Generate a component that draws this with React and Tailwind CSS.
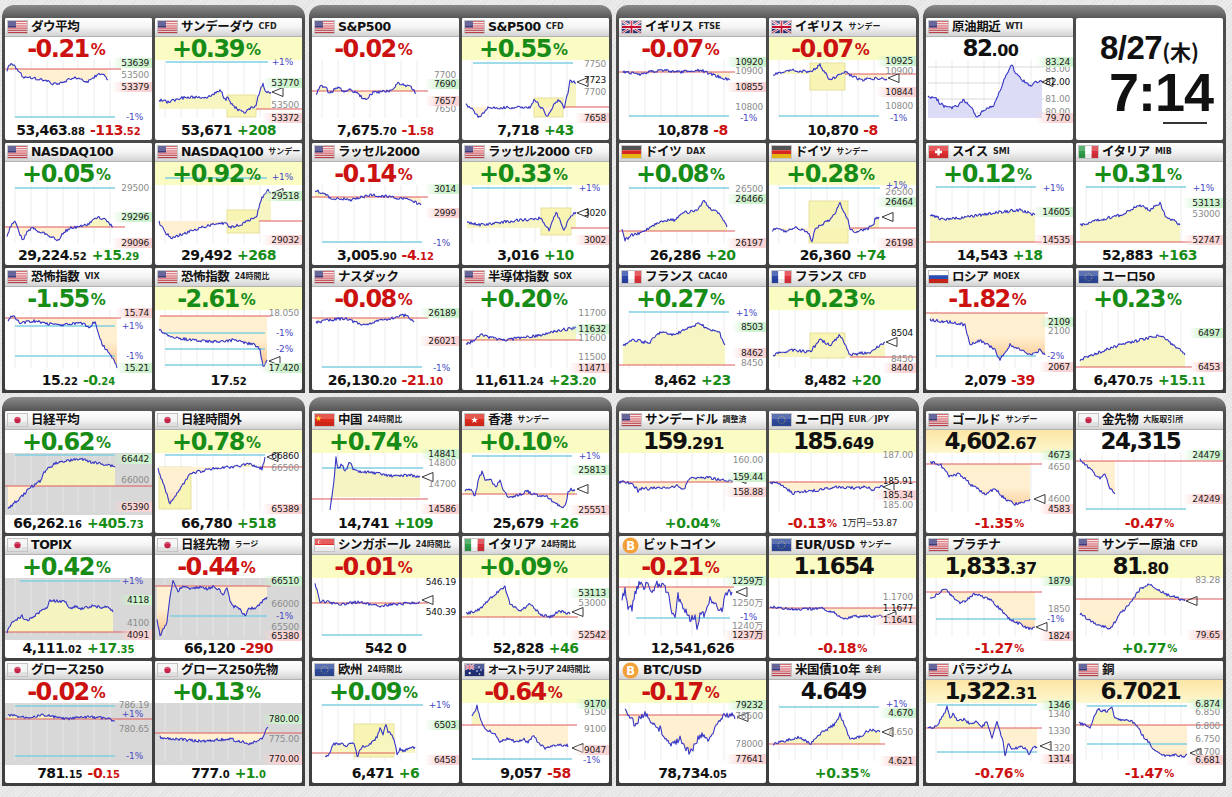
import React from 'react';

const NUM = "font-['DejaVu_Sans','Noto_Sans_CJK_JP',sans-serif]";

function P(s) {
  return s.trim().split(/\s+/).map((p) => p.split(',').map(Number));
}
function rng(seed) {
  let s = (seed * 7919 + 13) % 233280;
  return () => {
    s = (s * 9301 + 49297) % 233280;
    return s / 233280;
  };
}
function buildLine(pts, nz, seed) {
  const r = rng(seed);
  const out = [];
  for (let i = 0; i < pts.length - 1; i++) {
    const [x0, y0] = pts[i];
    const [x1, y1] = pts[i + 1];
    for (let x = x0; x < x1; x += 1) {
      const t = (x - x0) / (x1 - x0);
      out.push([x, y0 + (y1 - y0) * t + (r() - 0.5) * nz]);
    }
  }
  out.push(pts[pts.length - 1]);
  return out.map(([x, y]) => [x, Math.max(-20, Math.min(62, y))]);
}

const T = [
  { n: 'ダウ平均', f: 'us', top: { k: 'pct', v: '-0.21' }, bot: { k: 'price', i: '53,463', d: '.88', ci: '-113', cd: '.52' },
    pts: '2,10 5,4 10,7 18,17 28,18 38,20 53,25 62,20 72,18 82,22 92,15 98,14 103,20', ref: 9, red: [9, 0, 116], cy: [[57, 10, 110]],
    lb: [[3, '53639', 'g'], [15, '53500', 'n'], [27, '53379', 'r'], [57, '-1%', 'p']] },
  { n: 'サンデーダウ', s: 'CFD', f: 'us', y: 1, top: { k: 'pct', v: '+0.39' }, bot: { k: 'price', i: '53,671', ci: '+208' },
    pts: '4,40 13,42 26,38 39,37 53,37 66,30 69,40 73,38 76,43 83,50 89,53 96,48 101,47 103,37 108,23 111,33 116,32', ref: 49, red: [49, 101, 147], cy: [[2, 11, 113]],
    lb: [[2, '+1%', 'p'], [23, '53770', 'g'], [45, '53500', 'n'], [58, '53372', 'r']], bx: [[72, 35, 101, 57]], mk: [117, 32] },
  { n: 'NASDAQ100', f: 'us', top: { k: 'pct', v: '+0.05' }, bot: { k: 'price', i: '29,224', d: '.52', ci: '+15', cd: '.29' },
    pts: '2,52 5,42 10,35 13,45 18,55 23,45 28,43 35,47 42,50 47,52 53,55 58,48 65,43 75,42 85,38 92,32 98,34 103,37 108,42', ref: 42, red: [42, 0, 120], cy: [[3, 10, 110]],
    lb: [[3, '29500', 'n'], [32, '29296', 'g'], [58, '29096', 'r']] },
  { n: 'NASDAQ100', s: 'サンデー', f: 'us', y: 1, top: { k: 'pct', v: '+0.92' }, bot: { k: 'price', i: '29,492', ci: '+268' },
    pts: '4,37 10,47 16,53 25,50 40,45 55,40 70,38 75,42 85,40 95,35 102,30 106,15 110,8 113,5 116,8', ref: 36, red: [36, 104, 147], cy: [[-7, 10, 112]],
    lb: [[-8, '+1%', 'p'], [11, '29518', 'g'], [55, '29032', 'r']], bx: [[72, 25, 104, 48]], mk: [117, 8] },
  { n: '恐怖指数', s: 'VIX', f: 'us', inv: true, top: { k: 'pct', v: '-1.55' }, bot: { k: 'price', i: '15', d: '.22', ci: '-0', cd: '.24' },
    pts: '3,10 8,6 15,13 30,11 45,14 60,15 75,13 85,17 90,11 95,30 100,38 105,45 110,52 112,58', ref: 8, red: [8, 0, 116], cy: [[16, 10, 110], [46, 10, 110]],
    lb: [[3, '15.74', 'r'], [16, '+1%', 'p'], [46, '-1%', 'p'], [58, '15.21', 'g']] },
  { n: '恐怖指数', s: '24時間比', f: 'us', y: 1, inv: true, top: { k: 'pct', v: '-2.61' }, bot: { k: 'price', i: '17', d: '.52' },
    pts: '4,20 20,28 40,30 60,32 80,30 100,35 105,40 108,57 112,50', ref: 6, red: [6, 5, 116], cy: [[23, 10, 110], [39, 10, 110], [55, 10, 110]],
    lb: [[3, '18.050', 'n'], [23, '-1%', 'p'], [39, '-2%', 'p'], [58, '17.420', 'g']], mk: [114, 51] },
  { n: 'S&P500', f: 'us', top: { k: 'pct', v: '-0.02' }, bot: { k: 'price', i: '7,675', d: '.70', ci: '-1', cd: '.58' },
    pts: '4,35 9,25 14,28 17,33 22,30 27,28 32,32 39,30 46,33 52,40 56,37 61,33 69,32 76,31 82,28 86,23 92,25 99,27 104,33', ref: 31, red: [31, 0, 116],
    lb: [[15, '7700', 'n'], [49, '7650', 'n'], [24, '7690', 'g'], [41, '7657', 'r']] },
  { n: 'S&P500', s: 'CFD', f: 'us', y: 1, top: { k: 'pct', v: '+0.55' }, bot: { k: 'price', i: '7,718', ci: '+43' },
    pts: '4,45 9,48 17,57 26,48 39,48 56,47 69,47 72,40 79,47 86,57 92,43 97,40 102,47 106,33 108,20 111,22 114,23', ref: 47, red: [47, 102, 147], cy: [[3, 11, 111]],
    lb: [[4, '7750', 'n'], [32, '7700', 'n'], [20, '7723', 'k'], [58, '7658', 'r']], bx: [[72, 38, 101, 57]], mk: [115, 22] },
  { n: 'ラッセル2000', f: 'us', top: { k: 'pct', v: '-0.14' }, bot: { k: 'price', i: '3,005', d: '.90', ci: '-4', cd: '.12' },
    pts: '3,5 10,8 19,13 29,14 39,15 49,12 59,10 69,11 79,12 89,13 99,15 109,20', ref: 12, red: [12, 0, 116], cy: [[57, 10, 110]],
    lb: [[4, '3014', 'g'], [28, '2999', 'r'], [58, '-1%', 'p']] },
  { n: 'ラッセル2000', s: 'CFD', f: 'us', y: 1, top: { k: 'pct', v: '+0.33' }, bot: { k: 'price', i: '3,016', ci: '+10' },
    pts: '5,37 19,40 39,37 59,35 79,33 87,45 94,27 102,45 109,30 114,27', ref: 43, red: [43, 109, 147], cy: [[3, 10, 110]],
    lb: [[3, '+1%', 'p'], [28, '3020', 'k'], [55, '3002', 'r']], bx: [[79, 23, 109, 50]], mk: [115, 28] },
  { n: 'ナスダック', f: 'us', top: { k: 'pct', v: '-0.08' }, bot: { k: 'price', i: '26,130', d: '.20', ci: '-21', cd: '.10' },
    pts: '4,12 19,10 34,8 49,15 64,12 79,8 94,5 102,12', ref: 8, red: [8, 0, 116], cy: [[57, 10, 110]],
    lb: [[3, '26189', 'g'], [31, '26021', 'r'], [58, '-1%', 'p']] },
  { n: '半導体指数', s: 'SOX', f: 'us', top: { k: 'pct', v: '+0.20' }, bot: { k: 'price', i: '11,611', d: '.24', ci: '+23', cd: '.20' },
    pts: '4,35 19,25 39,30 59,28 79,25 99,20 114,18', ref: 30, red: [30, 0, 120],
    lb: [[3, '11700', 'n'], [28, '11600', 'n'], [47, '11500', 'n'], [19, '11632', 'g'], [58, '11471', 'r']] },
  { n: 'イギリス', s: 'FTSE', f: 'uk', top: { k: 'pct', v: '-0.07' }, bot: { k: 'price', i: '10,878', ci: '-8' },
    pts: '4,12 21,14 41,10 61,12 81,10 101,17 111,20', ref: 12, red: [12, 0, 116], cy: [[56, 10, 110]],
    lb: [[11, '10900', 'n'], [47, '10800', 'n'], [2, '10920', 'g'], [27, '10855', 'r'], [58, '-1%', 'p']] },
  { n: 'イギリス', s: 'サンデー', f: 'uk', y: 1, top: { k: 'pct', v: '-0.07' }, bot: { k: 'price', i: '10,870', ci: '-8' },
    pts: '4,15 21,10 41,12 51,5 61,20 76,12 91,20 111,18 118,20', ref: 14, red: [14, 76, 147], cy: [[56, 10, 110]],
    lb: [[11, '10900', 'n'], [46, '10800', 'n'], [1, '10925', 'g'], [32, '10844', 'r'], [58, '-1%', 'p']], bx: [[41, 3, 76, 30]], mk: [119, 18] },
  { n: 'ドイツ', s: 'DAX', f: 'de', top: { k: 'pct', v: '+0.08' }, bot: { k: 'price', i: '26,286', ci: '+20' },
    pts: '3,45 6,55 13,50 20,48 26,45 33,42 40,37 46,35 55,35 60,32 65,27 71,27 78,25 81,22 85,14 88,20 93,25 98,27 103,32 108,42', ref: 46, red: [46, 0, 116], cy: [[3, 10, 110]],
    lb: [[4, '26500', 'n'], [14, '26466', 'g'], [58, '26197', 'r']] },
  { n: 'ドイツ', s: 'サンデー', f: 'de', y: 1, top: { k: 'pct', v: '+0.28' }, bot: { k: 'price', i: '26,360', ci: '+74' },
    pts: '3,45 10,43 16,47 25,42 33,45 40,48 43,57 46,43 53,40 60,35 66,28 71,17 75,28 78,32 81,43 86,47 93,45 100,43 105,38 106,33 110,32', ref: 43, red: [43, 81, 147], cy: [[3, 10, 111]],
    lb: [[0, '+1%', 'p'], [7, '26500', 'n'], [17, '26464', 'g'], [58, '26198', 'r']], bx: [[40, 16, 79, 58]], mk: [113, 32] },
  { n: 'フランス', s: 'CAC40', f: 'fr', top: { k: 'pct', v: '+0.27' }, bot: { k: 'price', i: '8,462', ci: '+23' },
    pts: '4,35 15,30 30,33 41,22 55,25 70,18 81,13 90,20 100,22 106,35', ref: 55, red: [55, 0, 116], cy: [[2, 10, 110]],
    lb: [[3, '+1%', 'p'], [53, '8450', 'n'], [17, '8503', 'g'], [43, '8462', 'r']] },
  { n: 'フランス', s: 'CFD', f: 'fr', y: 1, top: { k: 'pct', v: '+0.23' }, bot: { k: 'price', i: '8,482', ci: '+20' },
    pts: '4,45 21,40 41,42 51,30 61,35 71,25 81,45 101,42 111,35 116,32', ref: 47, red: [47, 81, 147],
    lb: [[49, '8450', 'n'], [23, '8504', 'k'], [58, '8440', 'r']], bx: [[41, 23, 76, 48]], mk: [117, 32] },
  { n: '原油期近', s: 'WTI', f: 'us', top: { k: 'price', i: '82', d: '.00' }, bot: null,
    pts: '2,37 9,37 14,43 19,47 26,48 32,45 37,40 42,43 47,50 51,57 56,52 62,48 67,47 71,37 76,25 81,13 86,5 89,12 92,15 96,20 101,23 104,26 109,22 116,22',
    area: [58, '#dcdcf6'], hl: [7, 23, 39, 53],
    lb: [[9, '83.00', 'n'], [39, '81.00', 'n'], [52, '80.00', 'n'], [2, '83.24', 'g'], [22, '82.00', 'k'], [58, '79.70', 'r']], mk: [116, 22] },
  { clock: true },
  { n: 'スイス', s: 'SMI', f: 'ch', top: { k: 'pct', v: '+0.12' }, bot: { k: 'price', i: '14,543', ci: '+18' },
    pts: '4,30 19,35 34,33 54,30 74,27 94,25 109,30', ref: 57, red: [57, 0, 116], cy: [[2, 10, 110]],
    lb: [[3, '+1%', 'p'], [27, '14605', 'g'], [55, '14535', 'r']] },
  { n: 'イタリア', s: 'MIB', f: 'it', top: { k: 'pct', v: '+0.31' }, bot: { k: 'price', i: '52,883', ci: '+163' },
    pts: '4,40 24,35 44,30 64,20 74,25 84,18 89,30 104,40', ref: 57, red: [57, 0, 116], cy: [[2, 10, 110]],
    lb: [[3, '+1%', 'p'], [29, '53000', 'n'], [18, '53113', 'g'], [55, '52747', 'r']] },
  { n: 'ロシア', s: 'MOEX', f: 'ru', top: { k: 'pct', v: '-1.82' }, bot: { k: 'price', i: '2,079', ci: '-39' },
    pts: '4,10 24,12 39,15 44,35 54,30 69,40 74,50 84,35 94,40 104,45 114,40 119,45', ref: 3, red: [3, 0, 122], cy: [[46, 10, 110]],
    lb: [[21, '2100', 'n'], [12, '2109', 'g'], [46, '-2%', 'p'], [57, '2067', 'r']] },
  { n: 'ユーロ50', f: 'eu', top: { k: 'pct', v: '+0.23' }, bot: { k: 'price', i: '6,470', d: '.75', ci: '+15', cd: '.11' },
    pts: '4,50 24,42 44,35 64,30 84,25 104,40 109,45', ref: 57, red: [57, 0, 116],
    lb: [[23, '6497', 'g'], [57, '6453', 'r']] },
];

const B = [
  { n: '日経平均', f: 'jp', gray: true, top: { k: 'pct', v: '+0.62' }, bot: { k: 'price', i: '66,262', d: '.16', ci: '+405', cd: '.73' },
    pts: '3,56 15,45 25,35 35,28 40,18 50,10 60,8 75,6 90,10 105,12 110,14', ref: 33, red: [33, 0, 147], cy: [[2, 10, 110]],
    lb: [[27, '66000', 'n'], [6, '66442', 'g'], [54, '65390', 'r']] },
  { n: '日経時間外', f: 'jp', y: 1, top: { k: 'pct', v: '+0.78' }, bot: { k: 'price', i: '66,780', ci: '+518' },
    pts: '3,16 10,36 15,51 25,36 35,21 55,16 75,14 95,11 107,16 110,4', ref: 14, red: [14, 105, 147], cy: [[2, 10, 110]],
    lb: [[15, '66500', 'n'], [3, '66860', 'k'], [56, '65389', 'r']], bx: [[4, 14, 36, 56]], mk: [112, 4] },
  { n: 'TOPIX', f: 'jp', gray: true, top: { k: 'pct', v: '+0.42' }, bot: { k: 'price', i: '4,111', d: '.02', ci: '+17', cd: '.35' },
    pts: '2,54 7,44 12,41 17,38 22,43 28,39 35,34 42,29 45,23 60,23 65,31 70,28 75,31 82,29 88,28 95,29 102,29 108,34', ref: 54, red: [54, 0, 147], cy: [[3, 15, 115]],
    lb: [[3, '+1%', 'p'], [45, '4100', 'n'], [22, '4118', 'g'], [57, '4091', 'r']] },
  { n: '日経先物', s: 'ラージ', f: 'jp', gray: true, top: { k: 'pct', v: '-0.44' }, bot: { k: 'price', i: '66,120', ci: '-290' },
    pts: '2,41 5,58 8,51 12,44 15,18 18,3 23,13 28,8 35,11 45,9 52,11 58,9 65,11 68,18 72,9 75,24 78,28 85,31 90,38 93,31 102,29 107,24 112,19', ref: 8, red: [8, 0, 116], cy: [[38, 15, 112]],
    lb: [[26, '66000', 'n'], [49, '65500', 'n'], [3, '66510', 'g'], [38, '-1%', 'p'], [58, '65380', 'r']] },
  { n: 'グロース250', f: 'jp', gray: true, top: { k: 'pct', v: '-0.02' }, bot: { k: 'price', i: '781', d: '.15', ci: '-0', cd: '.15' },
    pts: '3,12 20,14 40,12 60,16 80,14 100,15 110,18', ref: 16, red: [16, 0, 147], cy: [[3, 10, 110], [53, 10, 110]],
    lb: [[2, '786.19', 'n'], [11, '+1%', 'p'], [26, '780.65', 'n'], [53, '-1%', 'p']] },
  { n: 'グロース250先物', f: 'jp', gray: true, top: { k: 'pct', v: '+0.13' }, bot: { k: 'price', i: '777', d: '.0', ci: '+1', cd: '.0' },
    pts: '5,34 20,36 45,38 75,36 95,41 107,36 113,24', ref: 30, red: [30, 0, 147],
    lb: [[36, '775.00', 'n'], [16, '780.00', 'g'], [56, '770.00', 'r']] },
  { n: '中国', s: '24時間比', f: 'cn', y: 1, top: { k: 'pct', v: '+0.74' }, bot: { k: 'price', i: '14,741', ci: '+109' },
    pts: '18,56 20,43 22,26 24,4 26,16 30,11 33,18 38,9 41,16 46,19 55,19 68,21 81,23 95,22 108,24', area: [44, '#f6f4c2'], red: [46, 0, 116], cy: [[15, 10, 111]],
    lb: [[10, '14800', 'n'], [31, '14700', 'n'], [1, '14841', 'g'], [56, '14586', 'r']], mk: [110, 24] },
  { n: '香港', s: 'サンデー', f: 'hk', y: 1, top: { k: 'pct', v: '+0.10' }, bot: { k: 'price', i: '25,679', ci: '+26' },
    pts: '3,38 8,36 13,43 16,29 20,18 23,28 28,26 33,34 38,28 41,38 46,43 55,43 65,38 71,41 78,43 85,44 91,48 98,53 101,56 105,46 106,38 110,36 113,38', ref: 41, red: [41, 0, 115], cy: [[3, 10, 110]],
    lb: [[3, '+1%', 'p'], [17, '25813', 'g'], [57, '25551', 'r']], mk: [115, 36] },
  { n: 'シンガポール', s: '24時間比', f: 'sg', y: 1, top: { k: 'pct', v: '-0.01' }, bot: { k: 'price', i: '542 0' },
    pts: '3,6 8,23 28,26 48,24 68,28 88,26 108,24', ref: 25, red: [25, 0, 116], cy: [[57, 10, 110]],
    lb: [[4, '546.19', 'k'], [34, '540.39', 'k']], mk: [110, 22] },
  { n: 'イタリア', s: '24時間比', f: 'it', y: 1, top: { k: 'pct', v: '+0.09' }, bot: { k: 'price', i: '52,828', ci: '+46' },
    pts: '4,36 18,31 33,16 43,9 48,26 58,33 68,26 78,36 88,39 98,33 108,36', ref: 39, red: [39, 0, 116],
    lb: [[25, '53000', 'n'], [15, '53113', 'g'], [57, '52542', 'r']], mk: [110, 34] },
  { n: '欧州', s: '24時間比', f: 'eu', top: { k: 'pct', v: '+0.09' }, bot: { k: 'price', i: '6,471', ci: '+6' },
    pts: '13,53 18,51 21,41 28,41 35,43 40,39 43,43 45,54 48,48 51,43 55,44 60,39 65,34 68,26 71,31 74,22 76,29 80,31 83,41 85,51 88,46 91,48 98,46 103,44', ref: 50, red: [50, 0, 83], cy: [[2, 10, 111]],
    lb: [[2, '+1%', 'p'], [22, '6503', 'g'], [57, '6458', 'r']], bx: [[42, 21, 82, 54]] },
  { n: 'オーストラリア', s: '24時間比', nc: true, f: 'au', y: 1, top: { k: 'pct', v: '-0.64' }, bot: { k: 'price', i: '9,057', ci: '-58' },
    pts: '10,13 13,8 15,3 18,14 21,23 25,28 31,29 38,38 45,36 55,39 61,36 66,39 71,33 76,39 83,46 90,43 96,41 100,43 105,42 106,44', ref: 22, red: [22, 0, 115], cy: [[56, 10, 110]],
    lb: [[9, '9150', 'n'], [26, '9100', 'n'], [1, '9170', 'g'], [47, '9047', 'r'], [57, '-1%', 'p']], mk: [110, 45] },
  { n: 'サンデードル', s: '調整済', f: 'us', y: 1, top: { k: 'price', i: '159', d: '.291' }, bot: { k: 'pct', v: '+0.04' },
    pts: '0,29 6,29 14,31 19,38 24,35 31,36 39,34 48,36 58,33 63,35 66,36 68,29 71,24 78,25 88,24 98,26 108,28 114,28', ref: 29, red: [29, 0, 114],
    lb: [[7, '160.00', 'n'], [24, '159.44', 'g'], [39, '158.88', 'r']], mk: [116, 26] },
  { n: 'ユーロ円', s: 'EUR／JPY', f: 'eu', y: 1, top: { k: 'price', i: '185', d: '.649' }, bot: { k: 'pct', v: '-0.13', x: '1万円=53.87' },
    pts: '1,29 11,31 18,36 24,40 31,39 41,38 51,37 61,35 71,34 84,35 98,34 104,37 111,33 114,34', ref: 29, red: [29, 0, 147],
    lb: [[2, '187.00', 'n'], [52, '185.00', 'n'], [28, '185.91', 'k'], [42, '185.34', 'r']], mk: [114, 34] },
  { n: 'ビットコイン', f: 'btc', y: 1, top: { k: 'pct', v: '-0.21' }, bot: { k: 'price', i: '12,541,626' }, nz: 7,
    pts: '3,21 6,13 9,28 13,31 16,16 21,4 24,9 28,6 33,13 38,6 44,8 49,14 53,33 56,36 59,18 63,28 68,34 71,41 76,38 78,54 81,38 86,36 91,19 94,26 98,28 103,34 106,16 109,13 113,14', ref: 9, red: [9, 0, 115], cy: [[40, 17, 111]],
    lb: [[25, '1250万', 'n'], [48, '1240万', 'n'], [3, '1259万', 'g'], [39, '-1%', 'p'], [57, '1237万', 'r']], mk: [117, 14] },
  { n: 'EUR/USD', s: 'サンデー', f: 'eu', y: 1, top: { k: 'price', i: '1.1654' }, bot: { k: 'pct', v: '-0.18' },
    pts: '1,29 14,30 28,32 41,31 51,30 61,33 71,38 74,41 81,39 94,38 108,39 114,38', ref: 30, red: [30, 0, 147],
    lb: [[19, '1.1700', 'n'], [30, '1.1677', 'k'], [42, '1.1641', 'r']], mk: [116, 38] },
  { n: 'BTC/USD', f: 'btc', y: 1, top: { k: 'pct', v: '-0.17' }, bot: { k: 'price', i: '78,734', d: '.05' }, nz: 7,
    pts: '6,8 16,21 26,11 41,26 51,41 61,36 71,51 81,31 91,36 101,16 111,11 116,16', ref: 12, red: [12, 0, 115],
    lb: [[13, '78500', 'n'], [41, '78000', 'n'], [2, '79232', 'g'], [56, '77641', 'r']], mk: [118, 14] },
  { n: '米国債10年', s: '金利', f: 'us', top: { k: 'price', i: '4.649' }, bot: { k: 'pct', v: '+0.35' },
    pts: '4,41 16,38 31,34 41,41 51,31 66,21 71,11 81,36 91,34 101,26 111,29', ref: 41, red: [41, 0, 116], cy: [[4, 10, 110]],
    lb: [[1, '+1%', 'p'], [29, '4.650', 'n'], [10, '4.670', 'g'], [58, '4.621', 'r']], mk: [113, 29] },
  { n: 'ゴールド', s: 'サンデー', f: 'us', y: 2, top: { k: 'price', i: '4,602', d: '.67' }, bot: { k: 'pct', v: '-1.35' },
    pts: '4,9 14,11 24,24 34,21 44,31 59,41 69,36 79,46 89,51 99,49 104,46', ref: 11, red: [11, 0, 116],
    lb: [[14, '4650', 'n'], [46, '4600', 'n'], [2, '4673', 'g'], [56, '4583', 'r']], mk: [108, 46] },
  { n: '金先物', s: '大阪取引所', f: 'jp', top: { k: 'price', i: '24,315' }, bot: { k: 'pct', v: '-0.47' },
    pts: '4,6 14,16 24,26 29,21 34,36 39,41', ref: 8, red: [8, 0, 147], cy: [[56, 10, 110]],
    lb: [[2, '24479', 'g'], [46, '24249', 'r']] },
  { n: 'プラチナ', f: 'us', y: 1, top: { k: 'price', i: '1,833', d: '.37' }, bot: { k: 'pct', v: '-1.27' },
    pts: '4,21 19,11 34,26 49,16 64,21 74,31 84,41 94,46 104,51 109,49', ref: 14, red: [14, 0, 116], cy: [[41, 10, 110]],
    lb: [[31, '1850', 'n'], [3, '1879', 'g'], [41, '-1%', 'p'], [58, '1824', 'r']], mk: [110, 49] },
  { n: 'サンデー原油', s: 'CFD', f: 'us', y: 1, top: { k: 'price', i: '81', d: '.80' }, bot: { k: 'pct', v: '+0.77' },
    pts: '4,36 19,46 34,51 44,36 54,26 64,11 74,6 89,16 104,21 109,23', ref: 21, red: [21, 0, 147],
    lb: [[2, '83.28', 'n'], [57, '79.65', 'r']], mk: [110, 23] },
  { n: 'パラジウム', f: 'us', y: 2, top: { k: 'price', i: '1,322', d: '.31' }, bot: { k: 'pct', v: '-0.76' },
    pts: '2,24 7,26 12,21 16,13 19,11 21,3 24,14 27,11 32,18 37,16 44,21 51,18 56,24 61,19 66,36 71,19 74,29 77,39 79,54 82,41 87,46 94,44 101,46 103,52 107,43 111,44', ref: 25, red: [25, 0, 116], cy: [[2, 11, 111], [49, 11, 111]],
    lb: [[11, '1340', 'n'], [28, '1330', 'n'], [45, '1320', 'n'], [2, '1346', 'g'], [56, '1314', 'r']], mk: [114, 43] },
  { n: '銅', f: 'us', y: 2, top: { k: 'price', i: '6.7021' }, bot: { k: 'pct', v: '-1.47' },
    pts: '3,20 9,22 14,26 17,16 22,6 27,8 32,8 36,3 39,16 44,16 51,18 57,19 62,23 67,33 72,38 77,46 84,51 91,53 97,52 104,53 109,54 111,51', ref: 22, red: [22, 0, 147], cy: [[3, 11, 111], [41, 11, 111]],
    lb: [[9, '6.850', 'n'], [23, '6.800', 'n'], [36, '6.750', 'n'], [49, '6.700', 'n'], [1, '6.874', 'g'], [57, '6.681', 'r']], mk: [114, 50] },
];

function Flag({ f }) {
  if (f === 'btc') {
    return (
      <svg width="17" height="17" viewBox="0 0 17 17" className="shrink-0">
        <circle cx="8.5" cy="8.5" r="8" fill="#f2a13a" />
        <text x="8.6" y="12.6" textAnchor="middle" fontSize="11.5" fontWeight="bold" fill="#fff" fontFamily="DejaVu Sans, sans-serif">B</text>
      </svg>
    );
  }
  let body = null;
  if (f === 'us') {
    body = (
      <>
        <rect width="19" height="12" fill="#fff" />
        {[0, 2, 4, 6, 8, 10, 12].map((i) => (
          <rect key={i} y={(i * 12) / 13} width="19" height={12 / 13} fill="#c9343f" />
        ))}
        <rect width="8" height="6.5" fill="#3c3b7e" />
      </>
    );
  } else if (f === 'uk' || f === 'au') {
    const uj = (
      <>
        <rect width="19" height="12" fill="#23307a" />
        <path d="M0 0L19 12M19 0L0 12" stroke="#fff" strokeWidth="2.4" />
        <path d="M0 0L19 12M19 0L0 12" stroke="#c8102e" strokeWidth="0.9" />
        <path d="M9.5 0V12M0 6H19" stroke="#fff" strokeWidth="3.4" />
        <path d="M9.5 0V12M0 6H19" stroke="#c8102e" strokeWidth="1.8" />
      </>
    );
    body = f === 'uk' ? uj : (
      <>
        <rect width="19" height="12" fill="#23307a" />
        <svg width="9.5" height="6" viewBox="0 0 19 12">{uj}</svg>
        <circle cx="4.7" cy="9.2" r="1.1" fill="#fff" />
        <circle cx="14" cy="3" r="0.8" fill="#fff" />
        <circle cx="16" cy="6" r="0.8" fill="#fff" />
        <circle cx="12" cy="7" r="0.8" fill="#fff" />
        <circle cx="14.5" cy="10" r="0.8" fill="#fff" />
      </>
    );
  } else if (f === 'de') {
    body = (
      <>
        <rect width="19" height="4" fill="#222" />
        <rect y="4" width="19" height="4" fill="#d6281e" />
        <rect y="8" width="19" height="4" fill="#f5c518" />
      </>
    );
  } else if (f === 'ch') {
    body = (
      <>
        <rect width="19" height="12" fill="#e03030" />
        <rect x="8.3" y="2.5" width="2.4" height="7" fill="#fff" />
        <rect x="6" y="4.8" width="7" height="2.4" fill="#fff" />
      </>
    );
  } else if (f === 'it' || f === 'fr') {
    const c = f === 'it' ? ['#2f9e4a', '#fff', '#d8303a'] : ['#2a44a8', '#fff', '#e0323a'];
    body = (
      <>
        <rect width="6.4" height="12" fill={c[0]} />
        <rect x="6.3" width="6.4" height="12" fill={c[1]} />
        <rect x="12.6" width="6.4" height="12" fill={c[2]} />
      </>
    );
  } else if (f === 'ru') {
    body = (
      <>
        <rect width="19" height="4" fill="#fff" />
        <rect y="4" width="19" height="4" fill="#2b4fb0" />
        <rect y="8" width="19" height="4" fill="#d6281e" />
      </>
    );
  } else if (f === 'eu') {
    body = (
      <>
        <rect width="19" height="12" fill="#2e4a9c" />
        {Array.from({ length: 12 }).map((_, i) => {
          const a = (i / 12) * Math.PI * 2;
          return <circle key={i} cx={9.5 + Math.cos(a) * 3.6} cy={6 + Math.sin(a) * 3.6} r="0.45" fill="#f4d03f" />;
        })}
      </>
    );
  } else if (f === 'jp') {
    body = (
      <>
        <rect width="19" height="12" fill="#f4f4f4" />
        <circle cx="9.5" cy="6" r="3.2" fill="#c8244a" />
      </>
    );
  } else if (f === 'cn') {
    body = (
      <>
        <rect width="19" height="12" fill="#de2a1c" />
        <polygon points="3.5,1.5 4.3,3.6 6.4,3.6 4.7,4.9 5.3,7 3.5,5.7 1.7,7 2.3,4.9 0.6,3.6 2.7,3.6" fill="#ffd200" />
      </>
    );
  } else if (f === 'hk') {
    body = (
      <>
        <rect width="19" height="12" fill="#de2a1c" />
        <polygon points="9.5,2.6 10.4,5 13,5 10.9,6.6 11.7,9.1 9.5,7.6 7.3,9.1 8.1,6.6 6,5 8.6,5" fill="#fff" />
      </>
    );
  } else if (f === 'sg') {
    body = (
      <>
        <rect width="19" height="6" fill="#e03030" />
        <rect y="6" width="19" height="6" fill="#fff" />
        <circle cx="4.5" cy="3" r="1.8" fill="#fff" />
        <circle cx="5.2" cy="3" r="1.6" fill="#e03030" />
      </>
    );
  }
  return (
    <svg width="19" height="12" viewBox="0 0 19 12" className="shrink-0 shadow-[0_0_0_1px_#c4c4c4]">
      {body}
      <rect width="19" height="5" fill="#fff" opacity="0.22" />
      <rect y="8" width="19" height="4" fill="#000" opacity="0.08" />
    </svg>
  );
}

function Chart({ d, id }) {
  const line = d.pts ? buildLine(P(d.pts), d.nz ?? 3, id + 3) : [];
  const str = line.map((p) => p[0].toFixed(1) + ',' + p[1].toFixed(1)).join(' ');
  const first = line[0];
  const last = line[line.length - 1];
  let fillD = null;
  if (line.length && d.ref != null) {
    fillD = `M${first[0]},${d.ref} L${str.split(' ').join(' L')} L${last[0]},${d.ref} Z`;
  }
  let areaD = null;
  if (line.length && d.area) {
    areaD = `M${first[0]},${d.area[0]} L${str.split(' ').join(' L')} L${last[0]},${d.area[0]} Z`;
  }
  const grid = [10, 26, 42, 58, 73, 89, 105];
  return (
    <svg className="absolute left-0 top-0" width="147" height="103" viewBox="0 0 147 103">
      {fillD && (
        <defs>
          <clipPath id={`ca${id}`}>
            <rect x="0" y="-30" width="147" height={d.ref + 30} />
          </clipPath>
          <clipPath id={`cb${id}`}>
            <rect x="0" y={d.ref} width="147" height="100" />
          </clipPath>
          <linearGradient id={`go${id}`} x1="0" y1={d.ref + 23} x2="0" y2={d.ref + 23 + 40} gradientUnits="userSpaceOnUse">
            <stop offset="0" stopColor="#fff0d2" />
            <stop offset="1" stopColor="#f8ad66" />
          </linearGradient>
        </defs>
      )}
      <g transform="translate(0,23)">
        {grid.map((x) => (
          <line key={x} x1={x} x2={x} y1="0" y2="58" stroke={d.gray ? '#e6e6e6' : '#ececec'} strokeWidth="1" />
        ))}
        {(d.hl || []).map((y) => (
          <line key={'h' + y} x1="2" x2="118" y1={y} y2={y} stroke="#d8d8d8" strokeWidth="1" />
        ))}
        {(d.bx || []).map((b, i) => (
          <rect key={'b' + i} x={b[0]} y={b[1]} width={b[2] - b[0]} height={b[3] - b[1]} fill="#f8f5b4" stroke="#e2d98e" strokeWidth="0.8" />
        ))}
        {areaD && <path d={areaD} fill={d.area[1]} />}
        {fillD && <path d={fillD} fill="#f7f5c0" opacity="0.95" clipPath={`url(#ca${id})`} />}
        {fillD && <path d={fillD} fill={`url(#go${id})`} clipPath={`url(#cb${id})`} />}
        {(d.cy || []).map((c, i) => (
          <line key={'c' + i} x1={c[1]} x2={c[2]} y1={c[0]} y2={c[0]} stroke="#7fcfe0" strokeWidth="1.3" />
        ))}
        {d.red && <line x1={d.red[1]} x2={d.red[2]} y1={d.red[0]} y2={d.red[0]} stroke="#dd5a5a" strokeWidth="1.2" />}
        {line.length > 0 && <polyline points={str} fill="none" stroke="#3535c6" strokeWidth="1.1" strokeLinejoin="round" />}
        {d.mk && (
          <path d={`M${d.mk[0] + 11},${d.mk[1] - 4.5} L${d.mk[0]},${d.mk[1]} L${d.mk[0] + 11},${d.mk[1] + 4.5} Z`} fill="none" stroke="#222" strokeWidth="0.9" />
        )}
      </g>
    </svg>
  );
}

const LBL = {
  g: 'pr-[3px] pl-[9px] text-[#1a1a1a] bg-[linear-gradient(to_right,rgba(205,242,205,0),#cdf2cd_45%)]',
  r: 'pr-[3px] pl-[9px] text-[#1a1a1a] bg-[linear-gradient(to_right,rgba(250,212,212,0),#fad4d4_45%)]',
  n: 'pr-[3px] text-[#8c8c8c]',
  p: 'pr-[9px] text-[#4848c4]',
  k: 'pr-[3px] text-[#111]',
};

function up(s) {
  return s.trim()[0] === '+';
}

function Tile({ d, id }) {
  const topGood = d.top.k === 'pct' ? up(d.top.v) !== !!d.inv : true;
  return (
    <div className="w-[147px] h-[122px] bg-white rounded-[2px] overflow-hidden flex flex-col">
      <div className="h-[19px] flex items-center bg-[linear-gradient(#ffffff,#f4f4f4_50%,#d3d3d3)] border-b border-[#b3b3b3] pl-[3px] overflow-hidden">
        <Flag f={d.f} />
        {d.nc ? (
          <span className="ml-[4px] text-[11px] font-bold text-[#111] tracking-[-1.6px] whitespace-nowrap leading-none font-['DejaVu_Sans','Noto_Sans_CJK_JP',sans-serif]">
            {d.n}
          </span>
        ) : (
          <span className="ml-[4px] text-[12.5px] font-bold text-[#111] tracking-[-0.4px] whitespace-nowrap leading-none font-['DejaVu_Sans','Noto_Sans_CJK_JP',sans-serif]">
            {d.n}
          </span>
        )}
        {d.s && (
          <span className={`${d.nc ? 'ml-[3px] tracking-[-0.3px]' : 'ml-[5px]'} text-[8px] font-bold text-[#222] whitespace-nowrap leading-none font-['DejaVu_Sans','Noto_Sans_CJK_JP',sans-serif]`}>
            {d.s}
          </span>
        )}
      </div>
      <div className="relative h-[103px] flex flex-col">
        {d.y === 1 && <div className="absolute left-0 top-0 w-full h-[23px] bg-[#fbfbc4]" />}
        {d.y === 2 && <div className="absolute left-0 top-0 w-full h-[23px] bg-[linear-gradient(#fde5a6,#fdf8cf)]" />}
        {d.gray && <div className="absolute left-0 top-[23px] w-full h-[62px] bg-[#d8d8d8]" />}
        <Chart d={d} id={id} />
        {d.lb.map(([y, t, k], i) => (
          <div
            key={i}
            className={`absolute right-0 h-[10px] flex items-center justify-end text-[9px] leading-none tracking-[-0.2px] whitespace-nowrap font-['DejaVu_Sans','Noto_Sans_CJK_JP',sans-serif] ${LBL[k]}`}
            style={{ top: y + 23 - 5 }}
          >
            {t}
          </div>
        ))}
        {d.top.k === 'pct' ? (
          <div className={`relative h-[23px] flex items-center justify-center pr-[24px] font-bold leading-none ${NUM} ${topGood ? 'text-[#178c17]' : 'text-[#cc1111]'}`}>
            <span className="text-[24px] tracking-[-1.5px]">{d.top.v}</span>
            <span className="text-[15px] ml-[2px] mt-[4px]">%</span>
          </div>
        ) : (
          <div className={`relative h-[23px] flex items-center justify-center pr-[18px] font-bold leading-none text-[#111] ${NUM}`}>
            <span className="text-[23px] tracking-[-1.5px]">{d.top.i}</span>
            {d.top.d && <span className="text-[16px] tracking-[-0.5px] mt-[4px]">{d.top.d}</span>}
          </div>
        )}
        <div className="h-[60px]" />
        {d.bot && d.bot.k === 'price' && (
          <div className={`relative h-[20px] flex items-center justify-center font-bold leading-none text-[#111] ${NUM}`}>
            <span className="text-[14px] tracking-[-0.5px]">{d.bot.i}</span>
            {d.bot.d && <span className="text-[10px] mt-[3px]">{d.bot.d}</span>}
            {d.bot.ci && (
              <span className={`ml-[5px] flex items-center ${up(d.bot.ci) !== !!d.inv ? 'text-[#178c17]' : 'text-[#cc1111]'}`}>
                <span className="text-[14px] tracking-[-0.5px]">{d.bot.ci}</span>
                {d.bot.cd && <span className="text-[10px] mt-[3px]">{d.bot.cd}</span>}
              </span>
            )}
          </div>
        )}
        {d.bot && d.bot.k === 'pct' && (
          <div className={`relative h-[20px] flex items-center justify-center font-bold leading-none ${NUM}`}>
            <span className={`flex items-center ${up(d.bot.v) ? 'text-[#178c17]' : 'text-[#cc1111]'}`}>
              <span className="text-[14px] tracking-[-0.4px]">{d.bot.v}</span>
              <span className="text-[10px] ml-[1px] mt-[2px]">%</span>
            </span>
            {d.bot.x && <span className="ml-[5px] text-[9px] font-normal text-[#222] tracking-[-0.2px]">{d.bot.x}</span>}
          </div>
        )}
      </div>
    </div>
  );
}

function Clock() {
  return (
    <div className="w-[147px] h-[122px] bg-white rounded-[2px] flex flex-col items-center font-['Liberation_Sans','Noto_Sans_CJK_JP',sans-serif] font-bold text-[#111]">
      <div className="mt-[13px] leading-none flex items-end">
        <span className="text-[33px] leading-none tracking-[-0.5px]">8/27</span>
        <span className="text-[21px] leading-none mb-[2px] font-['Noto_Sans_CJK_JP',sans-serif]">(木)</span>
      </div>
      <div className="mt-[1px] ml-[23px] text-[54px] leading-none tracking-[-1px]">7:14</div>
      <div className="mt-[3px] ml-[71px] w-[44px] h-[2px] bg-[#333]" />
    </div>
  );
}

function Panel({ items, base, bottom }) {
  return (
    <div className={`w-[303px] rounded-t-[12px] bg-[linear-gradient(#8a8a8a,#4c4c4c_16px,#3e3e3e)] ${bottom ? 'pt-[14px]' : 'pt-[13px]'} px-[3px] pb-[3px] grid grid-cols-2 gap-[3px]`}>
      {items.map((d, i) => (d.clock ? <Clock key={i} /> : <Tile key={i} d={d} id={base + i} />))}
    </div>
  );
}

export default function App() {
  const topPanels = [0, 1, 2, 3].map((p) => T.slice(p * 6, p * 6 + 6));
  const botPanels = [0, 1, 2, 3].map((p) => B.slice(p * 6, p * 6 + 6));
  return (
    <div className="w-[1232px] h-[797px] overflow-hidden bg-[repeating-linear-gradient(135deg,#e2e2e2_0px,#e2e2e2_1px,#ebebeb_1px,#ebebeb_3px)] pt-[5px] pl-[2px] flex flex-col gap-[4px]">
      <div className="flex gap-[4px]">
        {topPanels.map((items, p) => (
          <Panel key={p} items={items} base={p * 6} />
        ))}
      </div>
      <div className="flex gap-[4px]">
        {botPanels.map((items, p) => (
          <Panel key={p} items={items} base={100 + p * 6} bottom />
        ))}
      </div>
    </div>
  );
}
